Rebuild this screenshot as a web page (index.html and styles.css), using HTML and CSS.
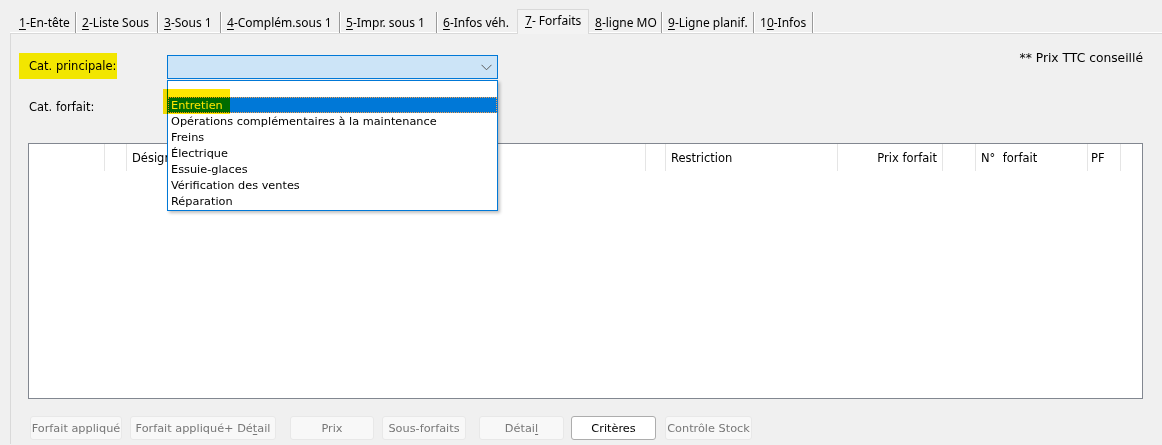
FILE: index.html
```html
<!DOCTYPE html>
<html lang="fr">
<head>
<meta charset="utf-8">
<title>Forfaits</title>
<link rel="stylesheet" href="styles.css">
</head>
<body>
<div class="tabs">
  <div class="tab t1"><u>1</u>-En-tête</div>
  <div class="tab t2"><u>2</u>-Liste Sous</div>
  <div class="tab t3"><u>3</u>-Sous 1</div>
  <div class="tab t4"><u>4</u>-Complém.sous 1</div>
  <div class="tab t5"><u>5</u>-Impr. sous 1</div>
  <div class="tab t6"><u>6</u>-Infos véh.</div>
  <div class="tab t7 active"><u>7</u>- Forfaits</div>
  <div class="tab t8"><u>8</u>-ligne MO</div>
  <div class="tab t9"><u>9</u>-Ligne planif.</div>
  <div class="tab t10">1<u>0</u>-Infos</div>
</div>
<div class="panel">
  <div class="row1">
    <div class="hl-label">Cat. principale:</div>
    <div class="combo-wrap">
      <div class="combo">
        <svg class="chev" width="11" height="7" viewBox="0 0 11 7"><polyline points="0.5,0.8 5.5,5.8 10.5,0.8" fill="none" stroke="#5a5a5a" stroke-width="1"/></svg>
      </div>
      <div class="dropdown">
        <div class="item first"></div>
        <div class="item sel">Entretien</div>
        <div class="item">Opérations complémentaires à la maintenance</div>
        <div class="item">Freins</div>
        <div class="item">Électrique</div>
        <div class="item">Essuie-glaces</div>
        <div class="item">Vérification des ventes</div>
        <div class="item">Réparation</div>
      </div>
      <div class="marker"></div>
    </div>
    <div class="ttc">** Prix TTC conseillé</div>
  </div>
  <div class="row2">Cat. forfait:</div>
  <div class="grid">
    <div class="ghead">
      <div class="c"></div>
      <div class="c"></div>
      <div class="c">Désignation</div>
      <div class="c"></div>
      <div class="c">Restriction</div>
      <div class="c right">Prix forfait</div>
      <div class="c"></div>
      <div class="c">N°&nbsp; forfait</div>
      <div class="c pf">PF</div>
      <div class="c last"></div>
    </div>
  </div>
  <div class="buttons">
    <button class="btn b1" disabled>Forfait appliqué</button>
    <button class="btn b2" disabled>Forfait appliqué+ Dé<u>t</u>ail</button>
    <button class="btn b3" disabled>Prix</button>
    <button class="btn b4" disabled>Sous-forfaits</button>
    <button class="btn b5" disabled>Détai<u>l</u></button>
    <button class="btn b6 on">Critères</button>
    <button class="btn b7" disabled>Contrôle Stock</button>
  </div>
</div>
</body>
</html>
```

FILE: styles.css
```css
html, body {
  margin: 0;
  padding: 0;
}
body {
  background: #f0f0f0;
  font-family: "DejaVu Sans", Tahoma, sans-serif;
  font-size: 11.5px;
  color: #000;
  width: 1162px;
  height: 445px;
  overflow: hidden;
}
u { text-decoration: underline; text-underline-offset: 2px; }

/* tabs */
.tabs {
  display: flex;
  align-items: flex-end;
  height: 33px;
  padding-left: 13px;
  box-sizing: border-box;
  font-family: "Noto Sans", "DejaVu Sans", sans-serif;
  font-size: 12px;
}
.tab {
  height: 21px;
  line-height: 21px;
  padding-left: 6px;
  box-sizing: border-box;
  border-right: 1px solid #9a9a9a;
  box-shadow: 1px 0 0 #ffffff;
  white-space: nowrap;
  color: #000;
}
.t1 { width: 63px; }
.t2 { width: 82px; }
.t3 { width: 63px; }
.t4 { width: 119px; }
.t5 { width: 97px; }
.t6 { width: 80px; }
.t7 { width: 72px; }
.t8 { width: 73px; }
.t9 { width: 92px; }
.t10 { width: 59px; }
.tab.active {
  height: 25px;
  line-height: 22px;
  margin-bottom: -1px;
  padding-left: 7px;
  background: #f3f3f3;
  border: 1px solid #d9d9d9;
  border-bottom: none;
  box-shadow: none;
  position: relative;
}
.tab.t6 { border-right: none; box-shadow: none; }

/* panel */
.panel {
  margin-left: 10px;
  border-left: 1px solid #d9d9d9;
  border-top: 1px solid #d9d9d9;
  box-shadow: 0 -1px 0 #ffffff;
  height: 411px;
  box-sizing: border-box;
  padding: 19px 19px 0 8px;
}
.row1 {
  display: flex;
  align-items: flex-end;
  height: 26px;
}
.hl-label {
  width: 98px;
  height: 26px;
  line-height: 27px;
  padding-left: 10px;
  box-sizing: border-box;
  background: #f2e600;
}
.combo-wrap {
  position: relative;
  margin-left: 50px;
}
.combo {
  width: 331px;
  height: 24px;
  box-sizing: border-box;
  border: 1px solid #0078d7;
  background: #cce4f7;
  display: flex;
  align-items: center;
  justify-content: flex-end;
  padding-right: 5px;
}
.chev { display: block; margin-top: 1px; }
.dropdown {
  position: absolute;
  left: 0;
  top: calc(100% + 1px);
  width: 331px;
  height: 131px;
  box-sizing: border-box;
  background: #fff;
  border: 1px solid #0078d7;
  box-shadow: 2px 2px 3px rgba(0, 0, 0, 0.25);
  font-size: 11.3px;
}
.item {
  height: 16px;
  line-height: 17px;
  padding-left: 3px;
  white-space: nowrap;
}
.item.first { height: 16px; }
.item.sel {
  background: #0078d7;
  color: #fff;
  outline: 1px dotted #f5a052;
  outline-offset: -1px;
}
.marker {
  position: absolute;
  left: -4px;
  top: 34px;
  width: 67px;
  height: 25px;
  background: #ffe600;
  mix-blend-mode: multiply;
}
.ttc {
  margin-left: auto;
  align-self: flex-start;
  margin-top: -2px;
  line-height: 14px;
  font-size: 12.3px;
}
.row2 {
  margin-top: 21px;
  padding-left: 10px;
  line-height: 14px;
}

/* grid */
.grid {
  margin: 29px 0 0 9px;
  height: 256px;
  box-sizing: border-box;
  border: 1px solid #828790;
  background: #fff;
}
.ghead {
  display: grid;
  grid-template-columns: 76px 22px 519px 20px 172px 105px 33px 112px 33px 1fr;
  height: 27px;
}
.c {
  border-right: 1px solid #e5e5e5;
  line-height: 28px;
  padding-left: 5px;
  white-space: nowrap;
  overflow: hidden;
}
.c.right { text-align: right; padding-right: 5px; padding-left: 0; }
.c.pf { padding-left: 3px; }
.c.last { border-right: none; }

/* buttons */
.buttons {
  display: flex;
  margin: 17px 0 0 11px;
}
.btn {
  height: 24px;
  box-sizing: border-box;
  font-family: "DejaVu Sans", Tahoma, sans-serif;
  font-size: 11.3px;
  padding: 0;
  border-radius: 3px;
  border: 1px solid #e8e8e8;
  background: #f8f8f8;
  color: #777777;
  white-space: nowrap;
}
.btn.on {
  background: #fff;
  border-color: #adadad;
  color: #000;
}
.b1 { width: 92px; }
.b2 { width: 146px; margin-left: 8px; }
.b3 { width: 84px; margin-left: 14px; }
.b4 { width: 84px; margin-left: 8px; }
.b5 { width: 85px; margin-left: 13px; }
.b6 { width: 85px; margin-left: 7px; }
.b7 { width: 87px; margin-left: 9px; }
```
